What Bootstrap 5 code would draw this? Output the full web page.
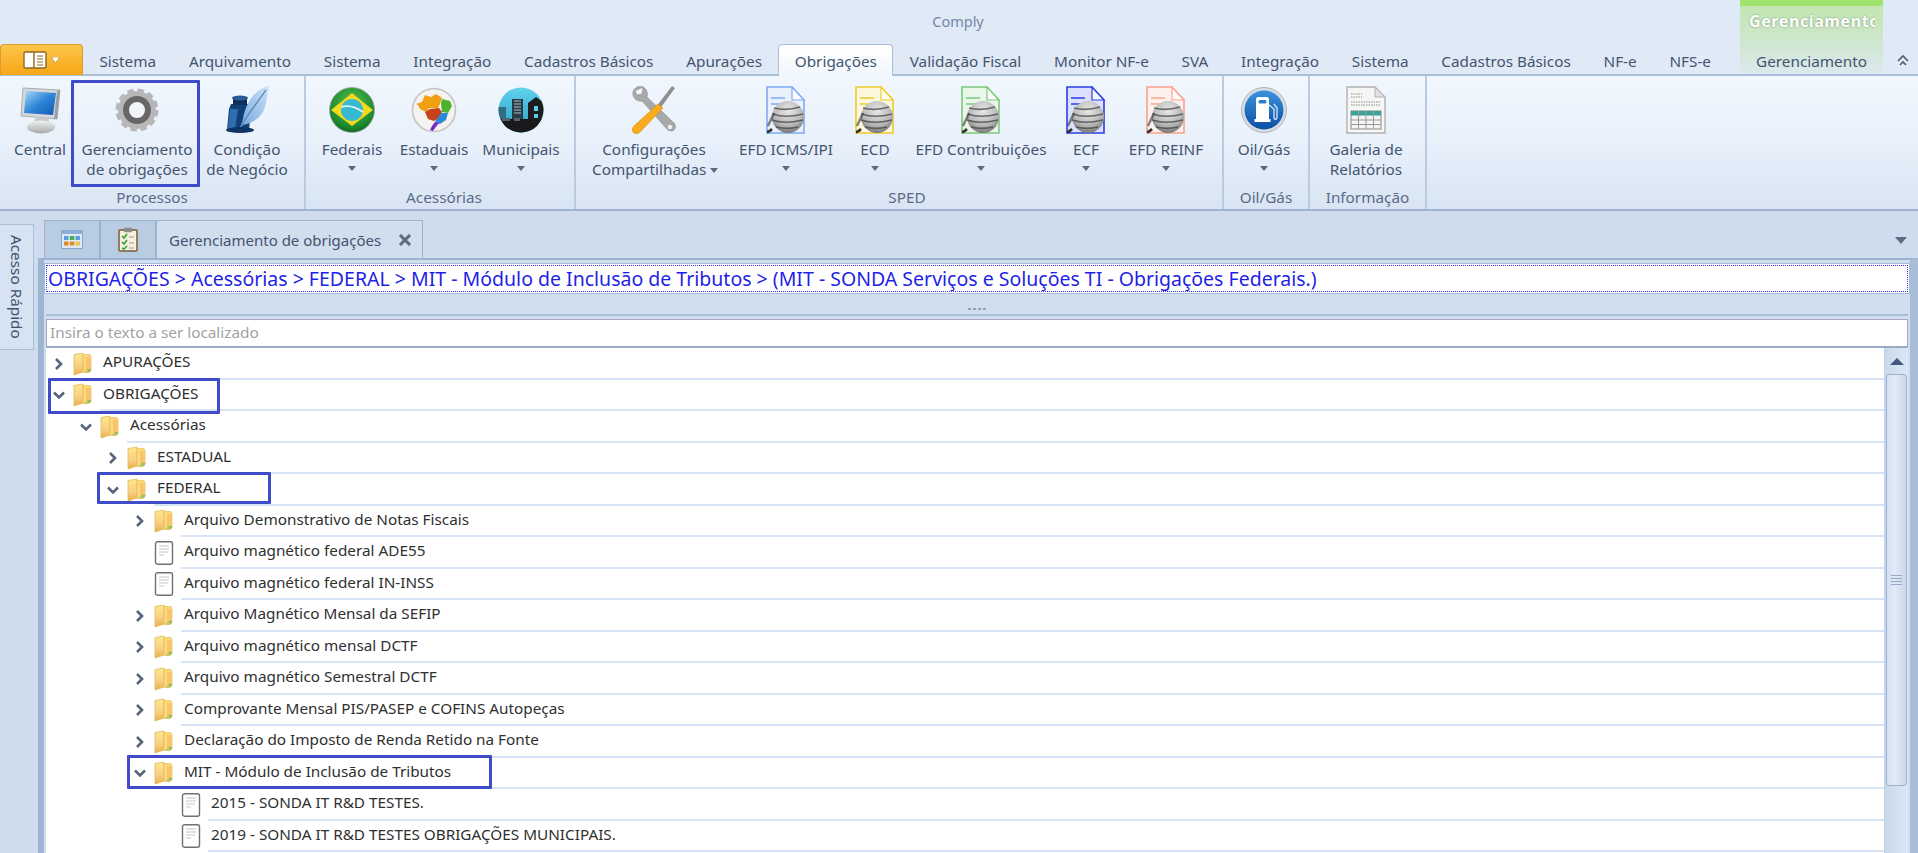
<!DOCTYPE html>
<html lang="pt">
<head>
<meta charset="utf-8">
<title>Comply</title>
<link href="https://cdn.jsdelivr.net/npm/bootstrap@5.3.0/dist/css/bootstrap.min.css" rel="stylesheet">
<style>
html,body{margin:0;height:853px;overflow:hidden}
body{width:1918px;position:relative;background:#cfdced;font-family:"Noto Sans","Liberation Sans",sans-serif;font-size:15.3px;color:#44546f;line-height:20px}
.sprite{position:absolute;width:0;height:0}
.titlebar{height:44px;background:#dfeaf6}
.app-title{flex:1;text-align:center;padding-left:176px;padding-top:11px;color:#7387a8;font-size:14.5px}
.ctx-head{width:143px;background:linear-gradient(#9fe26f 0 6px,#c3e5b0 6px,#cfe7d0);color:#fff;font-weight:700;font-size:16px;letter-spacing:.6px;text-shadow:0 0 2px #6a8a66;padding:11px 0 0 9px;white-space:nowrap;margin-right:35px}
.ctx-head span{display:block;width:126px;overflow:hidden}
.tabbar{height:32px;background:#dfeaf6;border-bottom:2px solid #a9bfd8}
.app-btn{width:83px;height:31px;background:linear-gradient(#fdc64a,#f6a516);border:1px solid #d99a30;border-bottom:0;border-radius:4px 4px 0 0}
.rtab{padding:7px 16.4px 0;white-space:nowrap;height:30px}
.rtab.active{background:linear-gradient(#fff,#f2f7fd);border:1px solid #a9bfd8;border-bottom:0;border-radius:4px 4px 0 0;height:32px;padding:6px 15.4px 0;margin-bottom:-2px}
.rtab.ctx{width:143px;text-align:center;padding:7px 0 0;background:linear-gradient(#cfe7d0,#dce9ef)}
.collapse-btn{width:35px;padding:5px 0 0 13px}
.ribbon{height:135px;background:linear-gradient(#f1f7fe,#e9f1fb 45%,#d9e5f3);border-bottom:2px solid #9fb4cf}
.rgroup{border-right:2px solid #b9cbe0;height:133px}
.g1{width:306px}.g2{width:270px;padding-left:8px}.g3{width:648px;padding-left:16px}.g4{width:86px}.g5{width:117px}
.rbtns{height:111px}
.rlabel{height:21px;text-align:center;color:#5a6b88;line-height:20px}
.rb{padding-top:8px;text-align:center;line-height:20px;white-space:nowrap}
.rb svg{display:block;margin:0 auto 3px;height:52px}
.caret-d{display:block;width:0;height:0;border:4px solid transparent;border-top:5px solid #5c6a80;border-bottom:0;margin:7px auto 0}
.caret-d.in{display:inline-block;margin:0 0 2px 4px}
.b-central{width:80px}.b-ger{width:114px}.b-cond{width:106px}
.b-fed{width:76px}.b-est{width:88px}.b-mun{width:86px}
.b-cfg{width:124px}.b-icms{width:100px;margin-left:20px}.b-ecd{width:50px;margin-left:14px}.b-con{width:138px;margin-left:12px}.b-ecf{width:50px;margin-left:11px}.b-rei{width:88px;margin-left:11px}
.b-oil{width:80px}.b-gal{width:112px}
.below{height:642px}
.below main{min-width:0}
.side{width:38px;padding-top:13px}
.vtab{width:34px;height:126px;background:#d6e3f2;border:1px solid #a9bfd8;border-left:0;writing-mode:vertical-rl;text-align:center;color:#44546f;line-height:32px}
.strip{height:47px;padding:9px 0 0 6px}
.dtab{width:56px;height:38px;background:#b9cde2;border:1px solid #9bb3cf;border-bottom:0}
.dtab.on{width:267px;background:#d0deee;padding:0 10px 0 12px;font-size:15px;height:39px;margin-bottom:-1px}
.dtab.on span{flex:1}
.strip-caret{margin-left:auto;margin-right:11px;margin-top:17px;border:6px solid transparent;border-top:7px solid #5e6d86;border-bottom:0;width:0;height:0}
.panel{flex:1;min-height:0;border-top:2px solid #9bb3cf;border-left:6px solid #9db5d3;border-right:8px solid #a7bdd8;padding-top:3px;background:#d0deee}
.crumb-wrap{height:31px;padding:1px;background:#fff;border:1px solid #a7bdd8}
.crumb{height:100%;border:1px dotted #3230e0;color:#1f1fe6;font-size:19.5px;line-height:25px;padding-left:1px;white-space:nowrap;overflow:hidden}
.splitter{height:20px}
.dots{display:flex;gap:2px;margin-top:14px}
.dots i{width:3px;height:2px;background:#8ea3bd;display:block}
.search-panel{flex:1;min-height:0;margin-left:2px;margin-right:2px;border-top:2px solid #a7bdd8;padding-top:3px;overflow:hidden;min-width:0}
.search{height:29px;background:#fff;border:1px solid #a9a6bd;border-bottom:2px solid #9aa9c4;color:#a2a2a2;padding:2px 0 0 3px}
.tree-wrap{flex:1;min-height:0;background:#fff}
.tree{flex:1;min-width:0;overflow:hidden;color:#2f2f2f}
.row-t{height:31.5px}
.row-t .chev{width:16px;flex:none;margin-left:5px;margin-right:6px;height:14px}
.row-t .fi{width:20px;height:24px;flex:none;margin-right:7px}
.row-t .lb{flex:1;height:100%;border-bottom:2px solid #d6e4f5;padding:3px 0 0 3px;white-space:nowrap}
.l1{padding-left:27px}.l2{padding-left:54px}.l3{padding-left:81px}.l4{padding-left:108px}
.scroll{width:24px;flex:none;background:linear-gradient(90deg,#c9d9ec,#dbe7f4);border-left:1px solid #c3d3e6}
.sc-up{height:26px;padding:10px 0 0 5px}
.sc-up i{display:block;width:0;height:0;border:7px solid transparent;border-bottom:7px solid #44587e;border-top:0}
.thumb{height:412px;margin:0 1px;background:linear-gradient(90deg,#d3e0f0,#e2ebf6 40%,#c9d8ea);border:1px solid #9db4d2;border-radius:3px}
.grip{display:flex;flex-direction:column;gap:2px;width:11px}
.grip i{display:block;height:1px;background:#93a8c4}
.anno{position:absolute;border:3px solid #3f4bc9;border-radius:1px;pointer-events:none}
.m1{left:71px;top:80px;width:129px;height:107px}
.m2{left:48px;top:378px;width:172px;height:36px}
.m3{left:97px;top:472px;width:174px;height:32px}
.m4{left:127px;top:755px;width:365px;height:34px}
</style>
</head>
<body>
<svg class="sprite" xmlns="http://www.w3.org/2000/svg">
<defs>
<linearGradient id="gScreen" x1="0" y1="0" x2="1" y2="1"><stop offset="0" stop-color="#a9d8f7"/><stop offset=".5" stop-color="#2f86d8"/><stop offset="1" stop-color="#1558b0"/></linearGradient>
<linearGradient id="gStand" x1="0" y1="0" x2="0" y2="1"><stop offset="0" stop-color="#f1f2f2"/><stop offset="1" stop-color="#a7a9a8"/></linearGradient>
<radialGradient id="gGreen" cx=".5" cy=".35" r=".75"><stop offset="0" stop-color="#4fc04a"/><stop offset=".7" stop-color="#1d8a2e"/><stop offset="1" stop-color="#0b4a18"/></radialGradient>
<radialGradient id="gBall" cx=".5" cy=".3" r=".8"><stop offset="0" stop-color="#e8e8e8"/><stop offset=".6" stop-color="#b4b4b4"/><stop offset="1" stop-color="#5b5b5b"/></radialGradient>
<linearGradient id="gSky" x1="0" y1="0" x2="0" y2="1"><stop offset="0" stop-color="#5fd3ee"/><stop offset="1" stop-color="#2a9dc0"/></linearGradient>
<linearGradient id="gFuel" x1="0" y1="0" x2="0" y2="1"><stop offset="0" stop-color="#3a93dd"/><stop offset="1" stop-color="#0b4fa6"/></linearGradient>
<linearGradient id="gFeather" x1="1" y1="0" x2="0" y2="1"><stop offset="0" stop-color="#cfe4fa"/><stop offset="1" stop-color="#6ea4dc"/></linearGradient>
<linearGradient id="gFolder" x1="0" y1="0" x2="0" y2="1"><stop offset="0" stop-color="#fbe88f"/><stop offset=".6" stop-color="#f9cd84"/><stop offset="1" stop-color="#e6b04c"/></linearGradient>
<symbol id="i-folder" viewBox="0 0 20 24">
  <path d="M1 2.5 10 1v19l-9 3z" fill="url(#gFolder)" stroke="#e2bb55" stroke-width=".8"/>
  <path d="M10 2.5h7l1 2v13l-8 3z" fill="#fcd97a" stroke="#e5bf58" stroke-width=".7"/>
  <path d="M13 5h5v12h-5z" fill="#f8c56c"/>
  <path d="M11 21l4-6 1 3 3-1-3 4z" fill="#d9c36a"/>
  <path d="M15 17h3v2.5h-3z" fill="#8dbf5a"/>
</symbol>
<symbol id="i-doc" viewBox="0 0 20 24">
  <rect x="1.5" y=".8" width="17" height="22.4" rx="2" fill="#fff" stroke="#6e7174" stroke-width="1.4"/>
  <path d="M5 5h10M5 8h10M5 11h9M5 14h5" stroke="#c3c5c7" stroke-width="1.2"/>
</symbol>
<symbol id="i-chev-r" viewBox="0 0 16 14"><path d="M5 2l5 5-5 5" fill="none" stroke="#55647a" stroke-width="2.6"/></symbol>
<symbol id="i-chev-d" viewBox="0 0 16 14"><path d="M3 4.5l5 5 5-5" fill="none" stroke="#55647a" stroke-width="2.6"/></symbol>
<symbol id="i-monitor" viewBox="0 0 42 48">
  <path d="M4 2 41 4 38 33 2 30z" fill="#d5d8da" stroke="#a8adb0"/>
  <path d="M7 5 37 7 34 29 5 27z" fill="url(#gScreen)"/>
  <path d="M38 5 41 4 38 33 35 33z" fill="#9a9fa3"/>
  <path d="M17 31h12l1 5H15z" fill="#c6c8c9"/>
  <ellipse cx="22" cy="41" rx="14" ry="6.5" fill="url(#gStand)"/>
</symbol>
<symbol id="i-gear" viewBox="0 0 46 46">
  <circle cx="23" cy="23" r="19" fill="#b7b7b7"/>
  <circle cx="23" cy="23" r="20" fill="none" stroke="#b7b7b7" stroke-width="3" stroke-dasharray="6.5 3.97"/>
  <circle cx="23" cy="23" r="11" fill="#f1f4f8" stroke="#676767" stroke-width="6"/>
</symbol>
<symbol id="i-quill" viewBox="0 0 46 50">
  <path d="M7 19h18l2 5-2 21H3l2-21z" fill="#123f78"/>
  <path d="M9 13h14v7H9z" fill="#0d2f5e"/>
  <path d="M6 24h8l-3 20H4z" fill="#2e6eb0"/>
  <ellipse cx="16" cy="13" rx="8" ry="2.6" fill="#2b5c95"/>
  <path d="M45 1C33 3 22 16 19 34l-3 9 3-3c14-3 21-11 23-22z" fill="url(#gFeather)"/>
  <path d="M42 5 24 30 15 44" fill="none" stroke="#577fa9" stroke-width="1.2"/>
  <ellipse cx="16" cy="45" rx="14" ry="3" fill="#0f3463"/>
</symbol>
<symbol id="i-br" viewBox="0 0 46 46">
  <circle cx="23" cy="23" r="22.5" fill="url(#gGreen)" stroke="#9aa39a" stroke-width=".8"/>
  <path d="M23 6 44 23 23 39 2 23z" fill="#f3d91f"/>
  <circle cx="23" cy="23" r="11" fill="#35b9cf"/>
  <path d="M12 20c7-2 15 0 22 5" fill="none" stroke="#e2f6fa" stroke-width="1.8"/>
</symbol>
<symbol id="i-map" viewBox="0 0 46 46">
  <circle cx="23" cy="23" r="21.5" fill="#f4f3f0" stroke="#c4c4c4" stroke-width="1.6"/>
  <path d="M5 17l6-2 3-7 6 2 5-3 6 4-2 6-2 4-9 0-3 4-6-3-2-4z" fill="#f0a010"/>
  <path d="M31 12l8 2 2 5-4 7-6-1-1-8z" fill="#4cb530"/>
  <path d="M19 22l9-1 3 4-3 6-5 3-6-2-3-7z" fill="#c8411a"/>
  <path d="M30 26l7 0-2 7-6 4-5-2 3-5z" fill="#2c87d6"/>
  <path d="M24 35l4 1-4 5-2 3-3-1 2-4z" fill="#7b27c6"/>
</symbol>
<symbol id="i-city" viewBox="0 0 46 46">
  <clipPath id="cCity"><circle cx="23" cy="23" r="22.5"/></clipPath>
  <g clip-path="url(#cCity)">
    <rect width="46" height="46" fill="url(#gSky)"/>
    <path d="M0 20h8v12H0z" fill="#2f6d84"/>
    <path d="M14 12h11v22H14z" fill="#2b3a45"/>
    <path d="M16 14h7M16 17h7M16 20h7M16 23h7M16 26h7" stroke="#9ec1cf" stroke-width="1.2"/>
    <path d="M30 16l8-6 8 6v18H30z" fill="#1d1d1f"/>
    <rect x="36" y="19" width="4" height="5" fill="#5ecbe6"/><rect x="36" y="27" width="4" height="4" fill="#5ecbe6"/>
    <path d="M0 32h46v14H0z" fill="#1a1a1c"/>
    <path d="M4 31h8v3H4zM16 31h6v3h-6z" fill="#4a6570"/>
  </g>
</symbol>
<symbol id="i-tools" viewBox="0 0 46 50">
  <path d="M12 2C6 0 1 4 2 10c1 4 5 7 9 6l24 27c2 3 6 4 8 2s2-6-1-8L16 12C17 8 16 4 12 2l-1 7-5 1-2-4z" fill="#a9a9a9" stroke="#8b8b8b" stroke-width=".6"/>
  <circle cx="39" cy="42" r="2.2" fill="#f0f0f0"/>
  <path d="M44 3 41 1 25 22l3 3z" fill="#8f8f8f"/>
  <path d="M27 19l5 4L9 47c-2 2-6 2-7 0s-1-4 1-6z" fill="#f8ac1d" stroke="#d98a0a" stroke-width=".6"/>
</symbol>
<symbol id="i-sped" viewBox="0 0 40 48">
  <path d="M1 1h25l12 13v33H1z" fill="#fff"/>
  <path d="M1 1h25l12 13v33H1z" fill="currentColor" fill-opacity=".16" stroke="currentColor" stroke-width="1.6"/>
  <path d="M26 1v13h12z" fill="#fff" fill-opacity=".7" stroke="currentColor" stroke-width="1.2"/>
  <path d="M5 12h14M5 18h20" stroke="currentColor" stroke-width="1.4"/>
  <path d="M1 46c2 0 3-1 5-3" stroke="#333" stroke-width="2.6" fill="none"/>
  <circle cx="22" cy="31" r="16" fill="url(#gBall)"/>
  <path d="M7 28c8 3 18 3 30 0M6 34c8 3 18 3 31 0M8 22c8 2 16 2 26-1M10 41c8 2 14 2 22 0" stroke="#444" stroke-width="1.6" fill="none" opacity=".75"/>
  <path d="M2 40 8 27" stroke="#333" stroke-width="2.4" opacity=".6"/>
</symbol>
<symbol id="i-fuel" viewBox="0 0 46 46">
  <circle cx="23" cy="23" r="22.5" fill="#d8dde2" stroke="#b0b5ba"/>
  <circle cx="23" cy="23" r="19.5" fill="url(#gFuel)"/>
  <path d="M15 12c0-1 1-2 2-2h9c1 0 2 1 2 2v20h1.500v3h-16v-3H15z" fill="#fff"/>
  <rect x="17.500" y="13" width="8" height="3.500" rx="1.500" fill="#2d7fd0"/>
  <path d="M28 18l5 4v8c0 3 3 3 3 0V21l-3-4" fill="none" stroke="#cfe3f6" stroke-width="1.4"/>
</symbol>
<symbol id="i-report" viewBox="0 0 40 48">
  <path d="M1 1h28l10 10v36H1z" fill="#f6f6f4" stroke="#b1b1b1" stroke-width="1.4"/>
  <path d="M29 1v10h10z" fill="#e0e0e0" stroke="#b1b1b1"/>
  <path d="M5 8h11M5 11h11M5 16h30M5 19h30" stroke="#8d8d8d" stroke-width="1.200" stroke-dasharray="1.500 1"/>
  <rect x="5" y="25" width="30" height="18" fill="#f4f4f4" stroke="#8a8a8a"/>
  <rect x="5" y="25" width="30" height="4.500" fill="#3ba299"/>
  <path d="M5 34h30M5 38.500h30M12.500 25v18M20 25v18M27.500 25v18" stroke="#9a9a9a"/>
</symbol>
<symbol id="i-grid" viewBox="0 0 22 19">
  <rect x=".5" y=".5" width="21" height="18" fill="#dfe9f5" stroke="#87a6cd"/>
  <rect x=".5" y=".5" width="21" height="3.500" fill="#8fb0d8"/>
  <rect x="3" y="6" width="4.500" height="4" fill="#5aa0dc"/><rect x="8.800" y="6" width="4.500" height="4" fill="#4fb04a"/><rect x="14.500" y="6" width="4.500" height="4" fill="#5aa0dc"/>
  <rect x="3" y="11.500" width="4.500" height="4" fill="#e38b2c"/><rect x="8.800" y="11.500" width="4.500" height="4" fill="#e38b2c"/><rect x="14.500" y="11.500" width="4.500" height="4" fill="#e8c84a"/>
</symbol>
<symbol id="i-clip" viewBox="0 0 20 25">
  <rect x="1" y="3" width="18" height="21" rx="1" fill="#f7efdc" stroke="#7b5a3c" stroke-width="1.500"/>
  <rect x="6" y=".8" width="8" height="4.500" rx="1" fill="#8e8a85"/>
  <path d="M4 9l2 2 3-4M4 15l2 2 3-4M4 21l2 1 3-3" fill="none" stroke="#2ea33a" stroke-width="1.600"/>
  <path d="M11 10h5M11 16h5M11 21h5" stroke="#9a9a9a"/>
</symbol>
</defs>
</svg>

<div class="titlebar d-flex">
  <div class="app-title">Comply</div>
  <div class="ctx-head"><span>Gerenciamento</span></div>
</div>
<nav class="tabbar d-flex align-items-start">
  <div class="app-btn d-flex align-items-center justify-content-center gap-1">
    <svg width="24" height="18" viewBox="0 0 24 18"><rect x="1" y="1" width="22" height="16" rx="1.500" fill="#fff" stroke="#8d6a22" stroke-width="1.400"/><path d="M11 1v16" stroke="#8d6a22" stroke-width="1.400"/><path d="M14 5h6M14 8h6M14 11h6M14 14h6" stroke="#8d6a22"/></svg>
    <svg width="9" height="6" viewBox="0 0 9 6"><path d="M0 0h9L4.500 6z" fill="#fff" stroke="#a77d22" stroke-width=".6"/></svg>
  </div>
  <div class="rtab">Sistema</div>
  <div class="rtab">Arquivamento</div>
  <div class="rtab">Sistema</div>
  <div class="rtab">Integração</div>
  <div class="rtab">Cadastros Básicos</div>
  <div class="rtab">Apurações</div>
  <div class="rtab active">Obrigações</div>
  <div class="rtab">Validação Fiscal</div>
  <div class="rtab">Monitor NF-e</div>
  <div class="rtab">SVA</div>
  <div class="rtab">Integração</div>
  <div class="rtab">Sistema</div>
  <div class="rtab">Cadastros Básicos</div>
  <div class="rtab">NF-e</div>
  <div class="rtab">NFS-e</div>
  <div class="rtab ctx ms-auto">Gerenciamento</div>
  <div class="collapse-btn"><svg width="14" height="13" viewBox="0 0 14 13"><path d="M2 7l5-5 5 5M4 11l3-3 3 3" fill="none" stroke="#4d5b70" stroke-width="1.600"/></svg></div>
</nav>
<section class="ribbon d-flex">
  <div class="rgroup g1 d-flex flex-column">
    <div class="rbtns d-flex">
      <div class="rb b-central"><svg width="42" viewBox="0 0 42 48"><use href="#i-monitor"/></svg>Central</div>
      <div class="rb b-ger"><svg width="46" viewBox="0 0 46 46"><use href="#i-gear"/></svg>Gerenciamento<br>de obrigações</div>
      <div class="rb b-cond"><svg width="46" viewBox="0 0 46 50"><use href="#i-quill"/></svg>Condição<br>de Negócio</div>
    </div>
    <div class="rlabel">Processos</div>
  </div>
  <div class="rgroup g2 d-flex flex-column">
    <div class="rbtns d-flex">
      <div class="rb b-fed"><svg width="46" viewBox="0 0 46 46"><use href="#i-br"/></svg>Federais<i class="caret-d"></i></div>
      <div class="rb b-est"><svg width="46" viewBox="0 0 46 46"><use href="#i-map"/></svg>Estaduais<i class="caret-d"></i></div>
      <div class="rb b-mun"><svg width="46" viewBox="0 0 46 46"><use href="#i-city"/></svg>Municipais<i class="caret-d"></i></div>
    </div>
    <div class="rlabel">Acessórias</div>
  </div>
  <div class="rgroup g3 d-flex flex-column">
    <div class="rbtns d-flex">
      <div class="rb b-cfg"><svg width="46" viewBox="0 0 46 50"><use href="#i-tools"/></svg>Configurações<br>Compartilhadas<i class="caret-d in"></i></div>
      <div class="rb b-icms"><svg width="40" viewBox="0 0 40 48" color="#7fa9f4"><use href="#i-sped"/></svg>EFD ICMS/IPI<i class="caret-d"></i></div>
      <div class="rb b-ecd"><svg width="40" viewBox="0 0 40 48" color="#eccc2a"><use href="#i-sped"/></svg>ECD<i class="caret-d"></i></div>
      <div class="rb b-con"><svg width="40" viewBox="0 0 40 48" color="#7cc97c"><use href="#i-sped"/></svg>EFD Contribuições<i class="caret-d"></i></div>
      <div class="rb b-ecf"><svg width="40" viewBox="0 0 40 48" color="#2b3fe2"><use href="#i-sped"/></svg>ECF<i class="caret-d"></i></div>
      <div class="rb b-rei"><svg width="40" viewBox="0 0 40 48" color="#f9a28c"><use href="#i-sped"/></svg>EFD REINF<i class="caret-d"></i></div>
    </div>
    <div class="rlabel">SPED</div>
  </div>
  <div class="rgroup g4 d-flex flex-column">
    <div class="rbtns d-flex">
      <div class="rb b-oil"><svg width="46" viewBox="0 0 46 46"><use href="#i-fuel"/></svg>Oil/Gás<i class="caret-d"></i></div>
    </div>
    <div class="rlabel">Oil/Gás</div>
  </div>
  <div class="rgroup g5 d-flex flex-column">
    <div class="rbtns d-flex">
      <div class="rb b-gal"><svg width="40" viewBox="0 0 40 48"><use href="#i-report"/></svg>Galeria de<br>Relatórios</div>
    </div>
    <div class="rlabel">Informação</div>
  </div>
</section>

<div class="below d-flex">
  <aside class="side"><div class="vtab">Acesso Rápido</div></aside>
  <main class="flex-fill d-flex flex-column">
    <div class="strip d-flex align-items-start">
      <div class="dtab d-flex align-items-center justify-content-center"><svg width="22" height="19" viewBox="0 0 22 19"><use href="#i-grid"/></svg></div>
      <div class="dtab d-flex align-items-center justify-content-center"><svg width="20" height="25" viewBox="0 0 20 25"><use href="#i-clip"/></svg></div>
      <div class="dtab on d-flex align-items-center"><span>Gerenciamento de obrigações</span>
        <svg width="14" height="12" viewBox="0 0 14 12"><path d="M2 1l10 10M12 1 2 11" stroke="#5e6a7c" stroke-width="3"/></svg></div>
      <div class="strip-caret"></div>
    </div>
    <div class="panel d-flex flex-column">
      <div class="crumb-wrap"><div class="crumb">OBRIGAÇÕES &gt; Acessórias &gt; FEDERAL &gt; MIT - Módulo de Inclusão de Tributos &gt; (MIT - SONDA Serviços e Soluções TI - Obrigações Federais.)</div></div>
      <div class="splitter d-flex justify-content-center"><div class="dots"><i></i><i></i><i></i><i></i></div></div>
      <div class="search-panel d-flex flex-column">
        <div class="search">Insira o texto a ser localizado</div>
        <div class="tree-wrap d-flex">
          <div class="tree">
            <div class="row-t d-flex align-items-center"><svg class="chev"><use href="#i-chev-r"/></svg><svg class="fi"><use href="#i-folder"/></svg><div class="lb">APURAÇÕES</div></div>
            <div class="row-t d-flex align-items-center"><svg class="chev"><use href="#i-chev-d"/></svg><svg class="fi"><use href="#i-folder"/></svg><div class="lb">OBRIGAÇÕES</div></div>
            <div class="row-t l1 d-flex align-items-center"><svg class="chev"><use href="#i-chev-d"/></svg><svg class="fi"><use href="#i-folder"/></svg><div class="lb">Acessórias</div></div>
            <div class="row-t l2 d-flex align-items-center"><svg class="chev"><use href="#i-chev-r"/></svg><svg class="fi"><use href="#i-folder"/></svg><div class="lb">ESTADUAL</div></div>
            <div class="row-t l2 d-flex align-items-center"><svg class="chev"><use href="#i-chev-d"/></svg><svg class="fi"><use href="#i-folder"/></svg><div class="lb">FEDERAL</div></div>
            <div class="row-t l3 d-flex align-items-center"><svg class="chev"><use href="#i-chev-r"/></svg><svg class="fi"><use href="#i-folder"/></svg><div class="lb">Arquivo Demonstrativo de Notas Fiscais</div></div>
            <div class="row-t l3 d-flex align-items-center"><span class="chev"></span><svg class="fi"><use href="#i-doc"/></svg><div class="lb">Arquivo magnético federal ADE55</div></div>
            <div class="row-t l3 d-flex align-items-center"><span class="chev"></span><svg class="fi"><use href="#i-doc"/></svg><div class="lb">Arquivo magnético federal IN-INSS</div></div>
            <div class="row-t l3 d-flex align-items-center"><svg class="chev"><use href="#i-chev-r"/></svg><svg class="fi"><use href="#i-folder"/></svg><div class="lb">Arquivo Magnético Mensal da SEFIP</div></div>
            <div class="row-t l3 d-flex align-items-center"><svg class="chev"><use href="#i-chev-r"/></svg><svg class="fi"><use href="#i-folder"/></svg><div class="lb">Arquivo magnético mensal DCTF</div></div>
            <div class="row-t l3 d-flex align-items-center"><svg class="chev"><use href="#i-chev-r"/></svg><svg class="fi"><use href="#i-folder"/></svg><div class="lb">Arquivo magnético Semestral DCTF</div></div>
            <div class="row-t l3 d-flex align-items-center"><svg class="chev"><use href="#i-chev-r"/></svg><svg class="fi"><use href="#i-folder"/></svg><div class="lb">Comprovante Mensal PIS/PASEP e COFINS Autopeças</div></div>
            <div class="row-t l3 d-flex align-items-center"><svg class="chev"><use href="#i-chev-r"/></svg><svg class="fi"><use href="#i-folder"/></svg><div class="lb">Declaração do Imposto de Renda Retido na Fonte</div></div>
            <div class="row-t l3 d-flex align-items-center"><svg class="chev"><use href="#i-chev-d"/></svg><svg class="fi"><use href="#i-folder"/></svg><div class="lb">MIT - Módulo de Inclusão de Tributos</div></div>
            <div class="row-t l4 d-flex align-items-center"><span class="chev"></span><svg class="fi"><use href="#i-doc"/></svg><div class="lb">2015 - SONDA IT R&amp;D TESTES.</div></div>
            <div class="row-t l4 d-flex align-items-center"><span class="chev"></span><svg class="fi"><use href="#i-doc"/></svg><div class="lb">2019 - SONDA IT R&amp;D TESTES OBRIGAÇÕES MUNICIPAIS.</div></div>
          </div>
          <div class="scroll d-flex flex-column">
            <div class="sc-up"><i></i></div>
            <div class="thumb d-flex align-items-center justify-content-center"><div class="grip"><i></i><i></i><i></i><i></i></div></div>
          </div>
        </div>
      </div>
    </div>
  </main>
</div>
<div class="anno m1"></div><div class="anno m2"></div><div class="anno m3"></div><div class="anno m4"></div>
<script src="https://cdn.jsdelivr.net/npm/bootstrap@5.3.0/dist/js/bootstrap.bundle.min.js"></script>
</body>
</html>
